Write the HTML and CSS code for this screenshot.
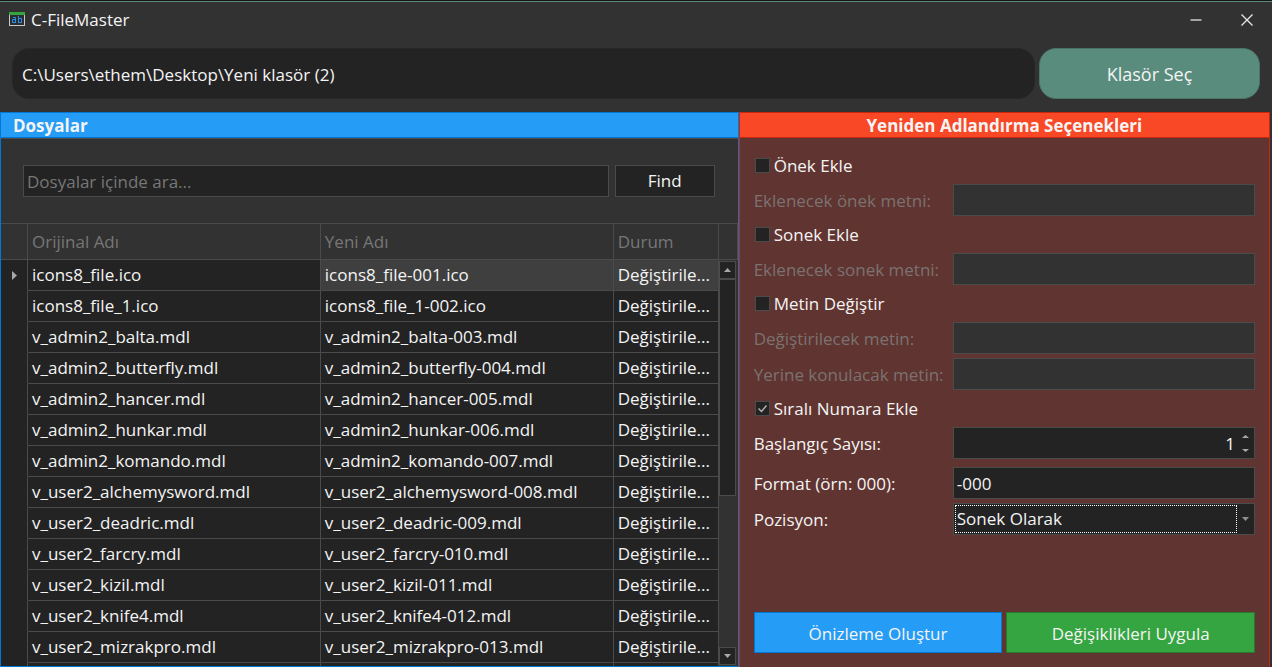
FILE: index.html
```
<!DOCTYPE html>
<html lang="tr">
<head>
<meta charset="utf-8">
<title>C-FileMaster</title>
<link rel="stylesheet" href="styles.css">
</head>
<body>
<div class="window">
  <header class="titlebar">
    <svg class="app-icon" width="16" height="15" viewBox="0 0 16 15" aria-hidden="true">
      <rect x="0.5" y="1.5" width="15" height="12" fill="#2b2d30" stroke="#c8c8c8"/>
      <rect width="16" height="3" fill="#33a53f"/>
      <path d="M4 5.500h2.500v5.500M6.500 7.500h-3v3h3M9.500 4v7M9.500 6.500h3v4h-3" fill="none" stroke="#2492ea"/>
    </svg>
    <h1 class="app-title">C-FileMaster</h1>
    <button class="caption-button" type="button" aria-label="Simge durumuna küçült">
      <svg width="12" height="12" viewBox="0 0 12 12"><path d="M0.500 6h11" stroke="#a4a4a4" stroke-width="2"/></svg>
    </button>
    <button class="caption-button" type="button" aria-label="Kapat">
      <svg width="12" height="12" viewBox="0 0 12 12"><path d="M0.500 0.500l11 11M11.500 0.500l-11 11" stroke="#e8e8e8" stroke-width="1.300"/></svg>
    </button>
  </header>

  <div class="path-row">
    <input class="path-input" type="text" aria-label="Klasör yolu" value="C:\Users\ethem\Desktop\Yeni klasör (2)">
    <button class="folder-button" type="button">Klasör Seç</button>
  </div>

  <main class="panels">
    <section class="panel files">
      <h2 class="panel-title">Dosyalar</h2>
      <div class="search-row">
        <input class="field search-input" type="text" aria-label="Dosyalar içinde ara" placeholder="Dosyalar içinde ara...">
        <button class="find-button" type="button">Find</button>
      </div>
      <div class="grid">
        <table class="file-table">
          <colgroup><col class="col-marker"><col><col><col class="col-status"></colgroup>
          <thead><tr><th></th><th>Orijinal Adı</th><th>Yeni Adı</th><th>Durum</th></tr></thead>
          <tbody>
            <tr class="current"><td class="marker"><svg width="5" height="9" viewBox="0 0 5 9"><path d="M0 0l5 4.500l-5 4.500z" fill="#a8a8a8"/></svg></td><td>icons8_file.ico</td><td>icons8_file-001.ico</td><td>Değiştirile...</td></tr>
            <tr><td></td><td>icons8_file_1.ico</td><td>icons8_file_1-002.ico</td><td>Değiştirile...</td></tr>
            <tr><td></td><td>v_admin2_balta.mdl</td><td>v_admin2_balta-003.mdl</td><td>Değiştirile...</td></tr>
            <tr><td></td><td>v_admin2_butterfly.mdl</td><td>v_admin2_butterfly-004.mdl</td><td>Değiştirile...</td></tr>
            <tr><td></td><td>v_admin2_hancer.mdl</td><td>v_admin2_hancer-005.mdl</td><td>Değiştirile...</td></tr>
            <tr><td></td><td>v_admin2_hunkar.mdl</td><td>v_admin2_hunkar-006.mdl</td><td>Değiştirile...</td></tr>
            <tr><td></td><td>v_admin2_komando.mdl</td><td>v_admin2_komando-007.mdl</td><td>Değiştirile...</td></tr>
            <tr><td></td><td>v_user2_alchemysword.mdl</td><td>v_user2_alchemysword-008.mdl</td><td>Değiştirile...</td></tr>
            <tr><td></td><td>v_user2_deadric.mdl</td><td>v_user2_deadric-009.mdl</td><td>Değiştirile...</td></tr>
            <tr><td></td><td>v_user2_farcry.mdl</td><td>v_user2_farcry-010.mdl</td><td>Değiştirile...</td></tr>
            <tr><td></td><td>v_user2_kizil.mdl</td><td>v_user2_kizil-011.mdl</td><td>Değiştirile...</td></tr>
            <tr><td></td><td>v_user2_knife4.mdl</td><td>v_user2_knife4-012.mdl</td><td>Değiştirile...</td></tr>
            <tr><td></td><td>v_user2_mizrakpro.mdl</td><td>v_user2_mizrakpro-013.mdl</td><td>Değiştirile...</td></tr>
            <tr><td></td><td></td><td></td><td></td></tr>
          </tbody>
        </table>
        <div class="scroll-column">
          <div class="scroll-head"></div>
          <div class="scrollbar">
            <button class="scroll-arrow" type="button" aria-label="Yukarı"><svg width="7" height="4" viewBox="0 0 7 4"><path d="M0 4l3.500-4l3.500 4z" fill="#a8a8a8"/></svg></button>
            <div class="scroll-track"><div class="scroll-thumb"></div></div>
            <button class="scroll-arrow" type="button" aria-label="Aşağı"><svg width="7" height="4" viewBox="0 0 7 4"><path d="M0 0l3.500 4l3.500-4z" fill="#a8a8a8"/></svg></button>
          </div>
        </div>
      </div>
    </section>

    <section class="panel options">
      <h2 class="panel-title">Yeniden Adlandırma Seçenekleri</h2>
      <form class="form">
        <label class="check"><input type="checkbox">Önek Ekle</label>
        <div class="row disabled"><label for="prefix">Eklenecek önek metni:</label><input class="field" id="prefix" type="text" disabled></div>
        <label class="check"><input type="checkbox">Sonek Ekle</label>
        <div class="row disabled"><label for="suffix">Eklenecek sonek metni:</label><input class="field" id="suffix" type="text" disabled></div>
        <label class="check"><input type="checkbox">Metin Değiştir</label>
        <div class="row disabled"><label for="find-text">Değiştirilecek metin:</label><input class="field" id="find-text" type="text" disabled></div>
        <div class="row disabled"><label for="new-text">Yerine konulacak metin:</label><input class="field" id="new-text" type="text" disabled></div>
        <label class="check"><input type="checkbox" checked>Sıralı Numara Ekle</label>
        <div class="row spaced">
          <label for="start">Başlangıç Sayısı:</label>
          <div class="field composite">
            <input class="number" id="start" type="number" value="1">
            <div class="spin">
              <button type="button" aria-label="Artır"><svg width="7" height="3" viewBox="0 0 7 3"><path d="M0 3l3.500-3l3.500 3z" fill="#a8a8a8"/></svg></button>
              <button type="button" aria-label="Azalt"><svg width="7" height="3" viewBox="0 0 7 3"><path d="M0 0l3.500 3l3.500-3z" fill="#a8a8a8"/></svg></button>
            </div>
          </div>
        </div>
        <div class="row"><label for="format">Format (örn: 000):</label><input class="field" id="format" type="text" value="-000"></div>
        <div class="row">
          <label for="position">Pozisyon:</label>
          <div class="field composite">
            <select class="select" id="position"><option>Sonek Olarak</option><option>Önek Olarak</option></select>
            <div class="drop"><svg width="7" height="4" viewBox="0 0 7 4"><path d="M0 0l3.500 4l3.500-4z" fill="#909090"/></svg></div>
          </div>
        </div>
        <div class="actions">
          <button class="action preview" type="button">Önizleme Oluştur</button>
          <button class="action apply" type="button">Değişiklikleri Uygula</button>
        </div>
      </form>
    </section>
  </main>
</div>
</body>
</html>
```
FILE: styles.css
```
* { box-sizing: border-box; }

body {
  margin: 0;
  background: #323232;
  color: #f4f4f4;
  font: 17px/24px "Open Sans", "Noto Sans", sans-serif;
}

input, button, select { font: inherit; color: inherit; margin: 0; border-radius: 0; outline: 0; }
button { padding: 0; border: 0; background: none; }
h1, h2 { margin: 0; font-size: 17px; line-height: 24px; }

.window {
  display: flex;
  flex-direction: column;
  height: 100vh;
  border-top: 1px solid #141414;
  overflow: hidden;
}

.titlebar {
  display: flex;
  align-items: center;
  height: 36px;
  flex: none;
  padding-left: 9px;
  border-top: 1px solid #5c8b7b;
}
.app-icon { margin-right: 6px; }
.app-title { flex: 1; font-weight: 400; }
.caption-button { display: flex; align-items: center; justify-content: center; width: 53px; height: 34px; }
.caption-button:last-child { width: 50px; }

.path-row { display: flex; gap: 4px; padding: 11px 12px 13px; flex: none; }
.path-input {
  flex: 1;
  min-width: 0;
  height: 51px;
  padding: 2px 9px 0;
  border: 1px solid #272727;
  border-radius: 17px;
  background: #232323;
}
.folder-button {
  width: 221px;
  height: 51px;
  border: 1px solid #4a7467;
  border-radius: 17px;
  background: #5a8c7d;
  font-size: 18px;
}

.panels { display: flex; flex: 1; min-height: 0; padding-right: 2px; }
.panel { display: flex; flex-direction: column; min-width: 0; border: 0 solid; }
.files { flex: 739 1 0; border-width: 0 1px 1px; border-color: #0078d4; }
.options { flex: 531 1 0; border-width: 0 1px; border-color: #c9280c; background: #603431; }
.panel-title {
  flex: none;
  height: 26px;
  padding-top: 1px;
  border: solid;
  border-width: 1px 0;
  font-weight: 700;
}
.files .panel-title { padding-left: 12px; background: #259cf5; border-color: #0078d4; }
.options .panel-title { text-align: center; background: #f84826; border-color: #c9280c; }

.field {
  min-width: 0;
  height: 32px;
  padding: 0 3px;
  border: 1px solid #4b4b4b;
  background: #232323;
}
.search-row { display: flex; gap: 6px; padding: 26px 23px 26px 22px; border-top: 1px solid #4b4b4b; flex: none; }
.search-input { flex: 1; }
.search-input::placeholder { color: #777; opacity: 1; }
.find-button { width: 100px; height: 32px; border: 1px solid #4b4b4b; background: #232323; }

.grid { display: flex; flex: 1; min-height: 0; overflow: hidden; border-top: 1px solid #4b4b4b; }
.file-table { flex: 1; align-self: flex-start; width: 0; table-layout: fixed; border-collapse: separate; border-spacing: 0; }
.col-marker { width: 27px; }
.col-status { width: 105px; }
.file-table th, .file-table td {
  padding: 0 4px;
  border: solid #4b4b4b;
  border-width: 0 1px 1px 0;
  text-align: left;
  white-space: nowrap;
  overflow: hidden;
}
.file-table th { height: 36px; color: #777; font-weight: 400; }
.file-table td { height: 31px; background: #232323; }
.file-table td:first-child { border-bottom-color: #232323; padding: 0; }
.file-table .current td:nth-child(n+3) { background: #3f3f3f; }
.file-table .marker { text-align: center; }
.marker svg { display: block; margin: 0 auto; }

.scroll-column { display: flex; flex-direction: column; width: 19px; }
.scroll-head { height: 36px; flex: none; border: solid #4b4b4b; border-width: 0 1px 1px 0; }
.scrollbar { display: flex; flex-direction: column; flex: 1; width: 17px; padding: 1px 0; }
.scroll-arrow { display: flex; align-items: center; justify-content: center; height: 18px; flex: none; border: 1px solid #4b4b4b; background: #232323; }
.scroll-track { flex: 1; }
.scroll-thumb { height: 59%; border: 1px solid #4b4b4b; background: #232323; }

.form { display: flex; flex-direction: column; flex: 1; gap: 4px; padding: 13px 14px 14px; }
.check { display: flex; align-items: center; gap: 4px; height: 29px; align-self: flex-start; }
.check input { appearance: none; width: 15px; height: 15px; margin-left: 1px; border: 1px solid #4b4b4b; background: #232323; }
.check input:checked {
  background: #232323 url("data:image/svg+xml,%3Csvg xmlns='http://www.w3.org/2000/svg' viewBox='0 0 13 13'%3E%3Cpath d='M2.500 6.500L5.500 9.500L10.500 3.500' fill='none' stroke='%23b0b0b0' stroke-width='1.500'/%3E%3C/svg%3E") center / 13px 13px no-repeat;
}
.row { display: grid; grid-template-columns: 199fr 302fr; align-items: center; }
.row > label { padding-top: 2px; }
.row.spaced { margin-bottom: 4px; }
.disabled { color: #7b7270; }
.field:disabled { background: #323232; }
.composite { display: flex; padding: 1px; }
.number { flex: 1; min-width: 0; padding: 2px 3px 0; border: 0; background: none; text-align: right; appearance: textfield; }
.number::-webkit-inner-spin-button { appearance: none; }
.spin { display: flex; flex-direction: column; width: 15px; }
.spin button { display: flex; flex: 1; align-items: center; justify-content: center; }
.select { flex: 1; min-width: 0; padding: 0 1px; border: 1px dotted #fff; background: #232323; appearance: none; }
.drop { display: flex; align-items: center; justify-content: center; width: 16px; }

.actions { display: flex; gap: 4px; margin-top: auto; }
.action { flex: 1; height: 41px; padding-top: 2px; border: 1px solid; }
.preview { background: #259cf5; border-color: #0078d4; }
.apply { background: #34a541; border-color: #26792f; }
```
